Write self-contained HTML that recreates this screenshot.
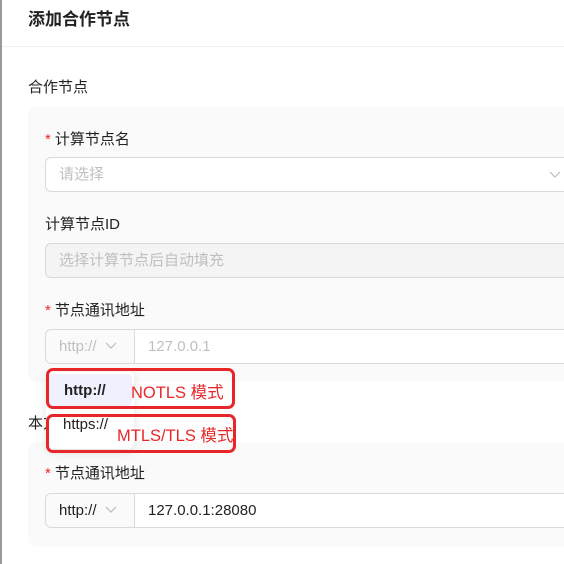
<!DOCTYPE html>
<html><head><meta charset="utf-8"><style>
*{box-sizing:border-box;margin:0;padding:0}
body{width:564px;height:564px;overflow:hidden;background:#fff;font-family:"Liberation Sans","Noto Sans CJK SC",sans-serif;position:relative;color:#222}
.a{position:absolute}
.lbl{font-size:15px;color:#222}
.lbl b{color:#f5222d;font-weight:normal;margin-right:4px}
.inp{position:absolute;left:45px;width:530px;height:35px;border:1px solid #d9d9d9;border-radius:6px;background:#fff;font-size:15px;color:#bfbfbf;padding:0 13px;line-height:33px}
.addon{position:absolute;left:0;top:0;width:89px;height:33px;border-right:1px solid #d9d9d9;background:#fafafa;padding-left:13px;border-radius:6px 0 0 6px}
.red{position:absolute;border:3px solid #e8262a;border-radius:7px}
.rt{position:absolute;color:#e8262a;font-size:16.5px}
</style></head><body>
<div class="a" style="left:0;top:0;width:2px;height:564px;background:#999"></div>
<div class="a" style="left:28px;top:5px;font-size:17px;font-weight:bold">添加合作节点</div>
<div class="a" style="left:2px;top:46px;width:562px;height:1px;background:#f0f0f0"></div>
<div class="a" style="left:28px;top:76px;font-size:15px">合作节点</div>
<div class="a" style="left:28px;top:106px;width:560px;height:276px;background:#fafafa;border-radius:8px"></div>
<div class="a lbl" style="left:45px;top:128px"><b>*</b>计算节点名</div>
<div class="inp" style="top:157px">请选择<svg class="a" style="left:503px;top:12px" width="12" height="10"><path d="M1 2l5 5 5-5" fill="none" stroke="#bbb" stroke-width="1.2"/></svg></div>
<div class="a lbl" style="left:45px;top:213px">计算节点ID</div>
<div class="inp" style="top:243px;background:#f4f4f4">选择计算节点后自动填充</div>
<div class="a lbl" style="left:45px;top:299px"><b>*</b>节点通讯地址</div>
<div class="inp" style="top:329px;padding-left:102px">127.0.0.1<div class="addon" style="color:#bfbfbf">http:// <svg style="margin-left:4px" width="12" height="10"><path d="M1 2l5 5 5-5" fill="none" stroke="#bbb" stroke-width="1.2"/></svg></div></div>
<div class="a" style="left:28px;top:412px;font-size:15px">本方节点</div>
<div class="a" style="left:28px;top:442px;width:560px;height:104px;background:#fafafa;border-radius:8px"></div>
<div class="a lbl" style="left:45px;top:462px"><b>*</b>节点通讯地址</div>
<div class="inp" style="top:493px;padding-left:102px;color:#222">127.0.0.1:28080<div class="addon" style="color:#222">http:// <svg style="margin-left:4px" width="12" height="10"><path d="M1 2l5 5 5-5" fill="none" stroke="#bbb" stroke-width="1.2"/></svg></div></div>
<div class="a" style="left:46px;top:372px;width:88px;height:77px;background:#fff;border-radius:6px;box-shadow:0 3px 10px rgba(0,0,0,.12)">
<div style="margin:2px;height:32px;background:#f0f0ff;border-radius:4px;font-weight:bold;font-size:15px;padding-left:16px;line-height:34px">http://</div>
<div style="font-size:15px;padding-left:17px;line-height:34px">https://</div>
</div>
<div class="red" style="left:46px;top:368px;width:189px;height:41px"></div>
<div class="red" style="left:46px;top:414px;width:190px;height:39px"></div>
<div class="rt" style="left:131px;top:379px">NOTLS 模式</div>
<div class="rt" style="left:117px;top:422px">MTLS/TLS 模式</div>
</body></html>
